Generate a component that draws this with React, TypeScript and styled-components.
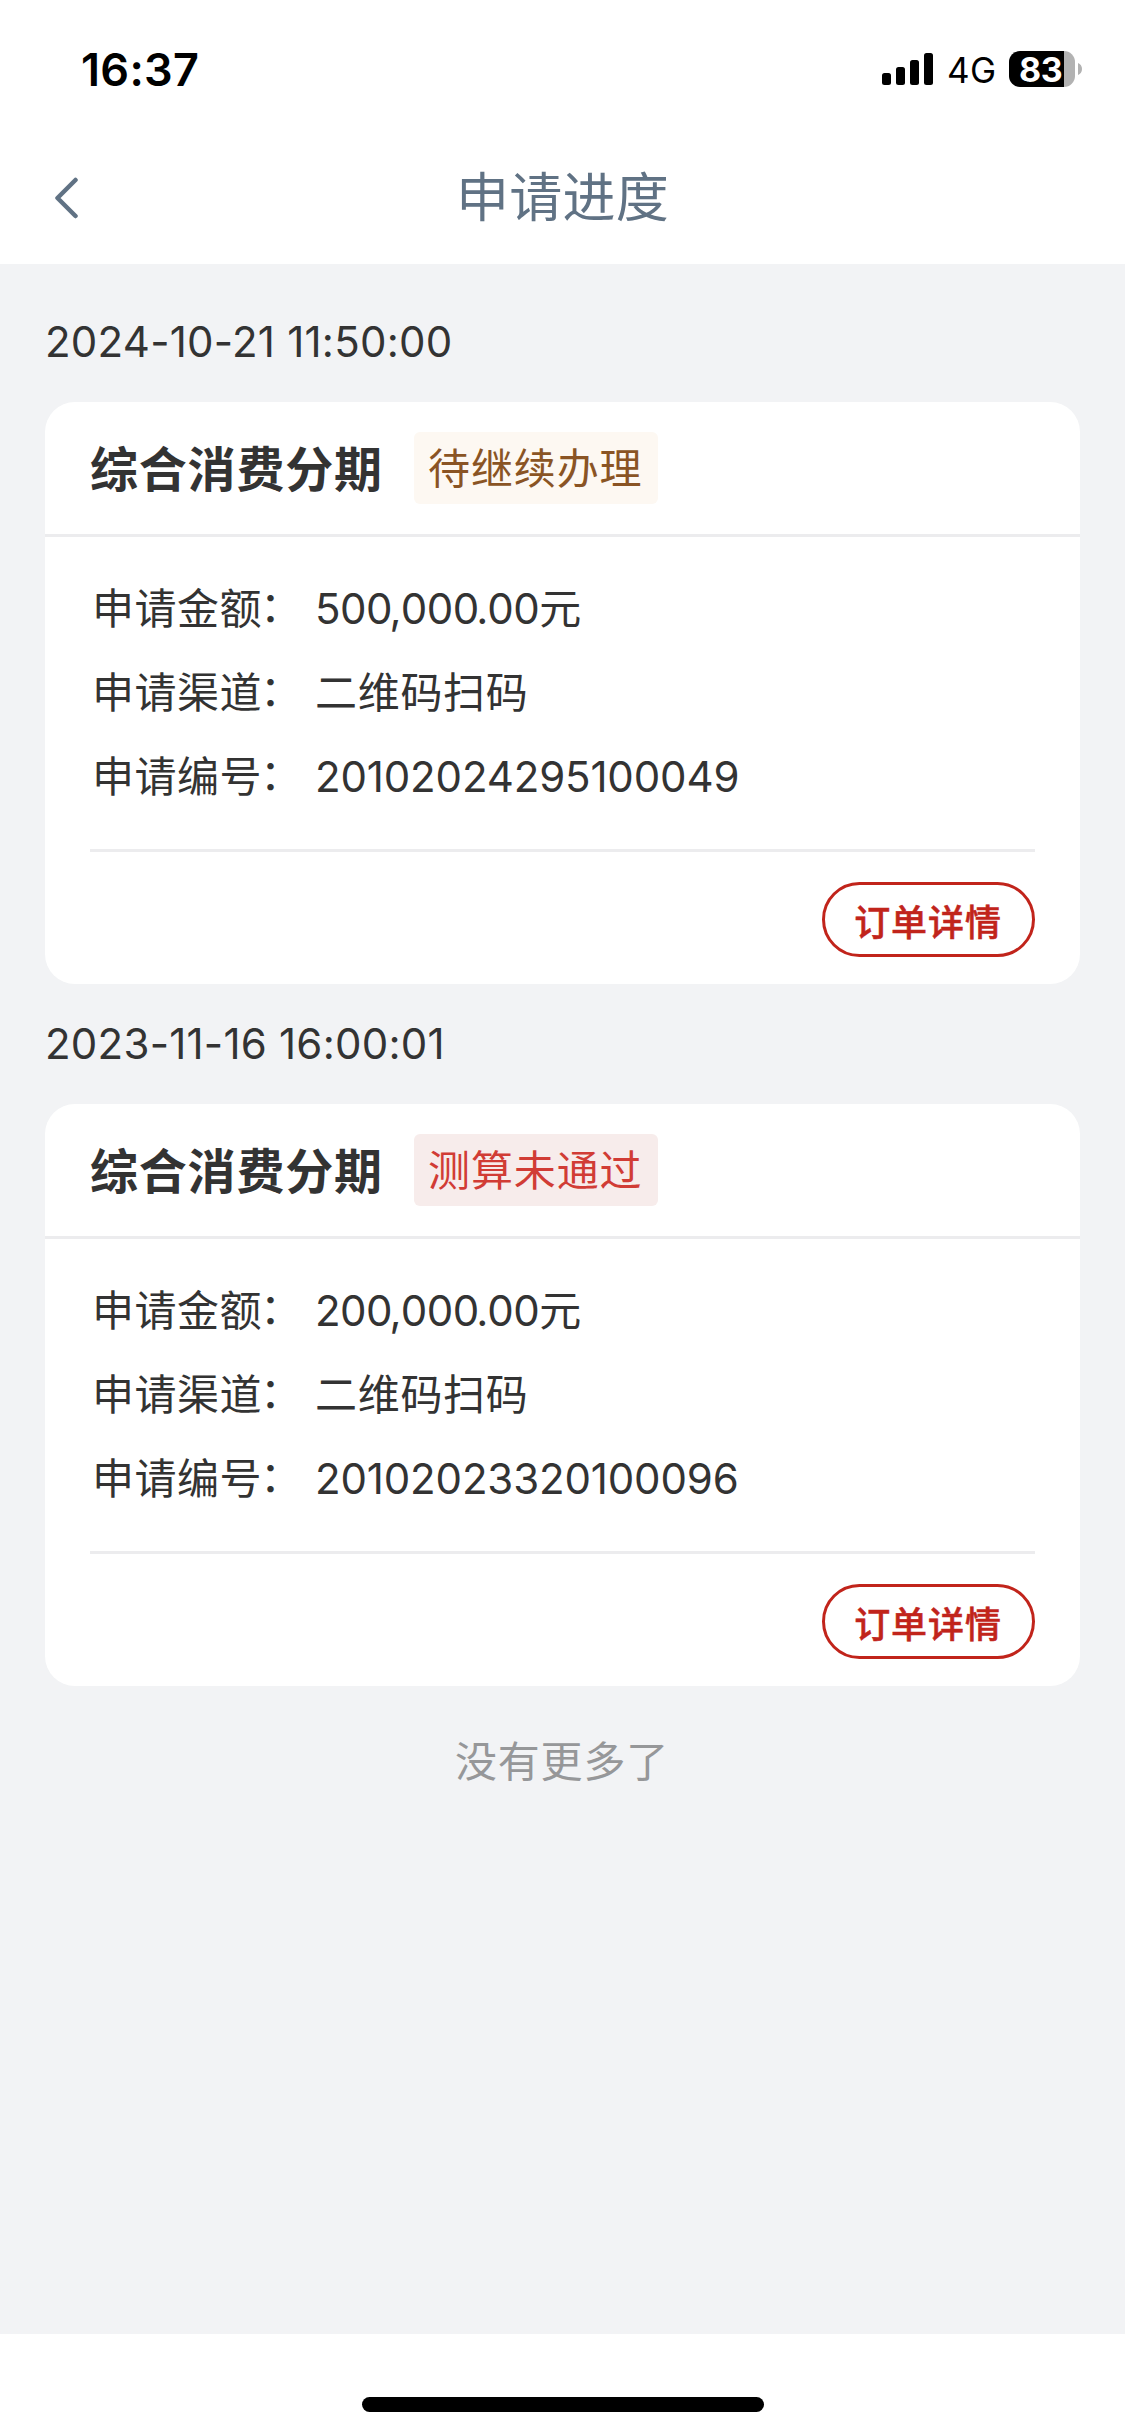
import React from "react";
import styled, { createGlobalStyle } from "styled-components";

const GlobalStyle = createGlobalStyle`
  * { box-sizing: border-box; }
  body {
    margin: 0;
    background: #ffffff;
    color: #333333;
    font-family: Inter, "Noto Sans CJK SC", sans-serif;
  }
`;

const Screen = styled.div`
  display: flex;
  flex-direction: column;
  width: 1125px;
  height: 2436px;
  background: #ffffff;
  overflow: hidden;
`;

const StatusBar = styled.header`
  display: flex;
  justify-content: space-between;
  height: 132px;
  padding: 0 43px 0 81px;
  color: #000000;
`;

const Clock = styled.time`
  margin-top: 42px;
  height: 55px;
  line-height: 55px;
  font-size: 45px;
  font-weight: 600;
  letter-spacing: 0.3px;
`;

const StatusIcons = styled.div`
  display: flex;
  align-items: center;
  height: 138px;
`;

const Network = styled.span`
  margin: 2px 0 0 13px;
  width: 62px;
  font-size: 35px;
  line-height: 42px;
  letter-spacing: 0.4px;
`;

const Battery = styled.div`
  display: flex;
  align-items: center;
  gap: 3px;
`;

const BatteryBody = styled.div<{ $level: number }>`
  width: 66px;
  height: 36px;
  padding-left: 10px;
  border-radius: 11px;
  background: linear-gradient(to right, #000000 ${(p) => p.$level}%, #b2b2b2 ${(p) => p.$level}%);
  color: #ffffff;
  font-size: 34px;
  font-weight: 700;
  line-height: 37px;
  letter-spacing: -0.4px;
`;

const NavBar = styled.nav`
  display: grid;
  grid-template-columns: 130px 1fr 130px;
  align-items: center;
  height: 132px;
  color: #607284;
`;

const BackButton = styled.button`
  display: flex;
  width: 80px;
  height: 80px;
  padding: 0 0 0 54px;
  align-items: center;
  border: 0;
  background: none;
  color: inherit;
`;

const NavTitle = styled.h1`
  margin: 0;
  text-align: center;
  font-size: 53px;
  font-weight: 400;
  line-height: 76px;
  letter-spacing: 0.3px;
`;

const Content = styled.main`
  flex: none;
  height: 2070px;
  padding: 0 45px;
  background: #f2f3f5;
`;

const DateLabel = styled.div<{ $first?: boolean }>`
  height: ${(p) => (p.$first ? 138 : 120)}px;
  padding-top: ${(p) => (p.$first ? 48 : 30)}px;
  line-height: 60px;
  font-size: 42px;
  letter-spacing: 0.24px;
`;

const Card = styled.article`
  height: 582px;
  border-radius: 30px;
  background: #ffffff;
`;

const CardHead = styled.div`
  display: flex;
  align-items: center;
  height: 135px;
  padding: 0 45px;
  border-bottom: 3px solid #ececee;
`;

const Product = styled.h2`
  margin: 0;
  padding-top: 3px;
  width: 324px;
  font-size: 48px;
  font-weight: 700;
  line-height: 70px;
  letter-spacing: 0.8px;
`;

const Badge = styled.span<{ $tone: "pending" | "rejected" }>`
  width: 244px;
  height: 72px;
  padding: 1px 0 0 14px;
  border-radius: 6px;
  line-height: 72px;
  font-size: 42px;
  letter-spacing: 0.9px;
  color: ${(p) => (p.$tone === "pending" ? "#8a5424" : "#d13c35")};
  background: ${(p) => (p.$tone === "pending" ? "#fdf8f2" : "#f7eceb")};
`;

const Details = styled.dl`
  display: flex;
  flex-direction: column;
  margin: 0 45px;
  height: 315px;
  padding-top: 30px;
  border-bottom: 3px solid #ececee;
`;

const Row = styled.div`
  display: flex;
  height: 84px;
  line-height: 84px;
  font-size: 42px;
`;

const Term = styled.dt`
  display: flex;
  width: 225px;
  padding-left: 2px;
  letter-spacing: 0.5px;
`;

const Colon = styled.span`
  margin: -2px 0 0 -2px;
`;

const Value = styled.dd<{ $spacing: number }>`
  margin: 0;
  letter-spacing: ${(p) => p.$spacing}px;
`;

const Separator = styled.span`
  margin: 0 -0.5px 0 -2.5px;
`;

const CardFoot = styled.div`
  display: flex;
  justify-content: flex-end;
  padding: 30px 45px 0;
`;

const OutlineButton = styled.button`
  width: 213px;
  height: 75px;
  padding: 8px 0 0 0;
  border: 3px solid #c1241b;
  border-radius: 38px;
  background: #ffffff;
  color: #c1241b;
  font: 500 36px/61px Inter, "Noto Sans CJK SC", sans-serif;
  letter-spacing: 0.9px;
  text-indent: -1px;
  -webkit-text-stroke: 0.5px #c1241b;
`;

const EndNote = styled.p`
  margin: 0;
  padding-top: 46px;
  line-height: 60px;
  text-align: center;
  font-size: 42px;
  letter-spacing: 0.8px;
  text-indent: -1px;
  color: #969799;
`;

const HomeArea = styled.footer`
  display: flex;
  justify-content: center;
  height: 102px;
  padding-top: 63px;
`;

const HomeIndicator = styled.div`
  width: 402px;
  height: 15px;
  border-radius: 8px;
  background: #000000;
`;

interface Application {
  date: string;
  status: string;
  tone: "pending" | "rejected";
  amount: string;
  number: string;
}

const applications: Application[] = [
  {
    date: "2024-10-21 11:50:00",
    status: "待继续办理",
    tone: "pending",
    amount: "500,000.00元",
    number: "20102024295100049",
  },
  {
    date: "2023-11-16 16:00:01",
    status: "测算未通过",
    tone: "rejected",
    amount: "200,000.00元",
    number: "20102023320100096",
  },
];

function Amount({ text }: { text: string }) {
  return (
    <>
      {text
        .split(/([,.])/)
        .map((part, i) => (i % 2 ? <Separator key={i}>{part}</Separator> : part))}
    </>
  );
}

function Label({ text }: { text: string }) {
  return (
    <Term>
      {text}
      <Colon>：</Colon>
    </Term>
  );
}

export default function App() {
  return (
    <Screen>
      <GlobalStyle />
      <StatusBar>
        <Clock>16:37</Clock>
        <StatusIcons>
          <svg width="52" height="32" viewBox="0 0 52 32">
            <rect x="0" y="20" width="9" height="12" rx="2.5" />
            <rect x="14" y="14" width="9" height="18" rx="2.5" />
            <rect x="28" y="7" width="9" height="25" rx="2.5" />
            <rect x="42" y="0" width="9" height="32" rx="2.5" />
          </svg>
          <Network>4G</Network>
          <Battery>
            <BatteryBody $level={83}>83</BatteryBody>
            <svg width="4" height="12" viewBox="0 0 4 12">
              <path d="M0 0C2.5 1 4 3 4 6S2.5 11 0 12Z" fill="#b2b2b2" />
            </svg>
          </Battery>
        </StatusIcons>
      </StatusBar>
      <NavBar>
        <BackButton aria-label="返回">
          <svg width="24" height="44" viewBox="0 0 24 44" fill="none">
            <path
              d="M21.5 4L3.5 22L21.5 40"
              stroke="currentColor"
              strokeWidth="4.5"
              strokeLinecap="round"
              strokeLinejoin="round"
            />
          </svg>
        </BackButton>
        <NavTitle>申请进度</NavTitle>
      </NavBar>
      <Content>
        {applications.map((item, index) => (
          <section key={item.number}>
            <DateLabel $first={index === 0}>{item.date}</DateLabel>
            <Card>
              <CardHead>
                <Product>综合消费分期</Product>
                <Badge $tone={item.tone}>{item.status}</Badge>
              </CardHead>
              <Details>
                <Row>
                  <Label text="申请金额" />
                  <Value $spacing={-0.5}>
                    <Amount text={item.amount} />
                  </Value>
                </Row>
                <Row>
                  <Label text="申请渠道" />
                  <Value $spacing={0.7}>二维码扫码</Value>
                </Row>
                <Row>
                  <Label text="申请编号" />
                  <Value $spacing={-0.15}>{item.number}</Value>
                </Row>
              </Details>
              <CardFoot>
                <OutlineButton>订单详情</OutlineButton>
              </CardFoot>
            </Card>
          </section>
        ))}
        <EndNote>没有更多了</EndNote>
      </Content>
      <HomeArea>
        <HomeIndicator />
      </HomeArea>
    </Screen>
  );
}
